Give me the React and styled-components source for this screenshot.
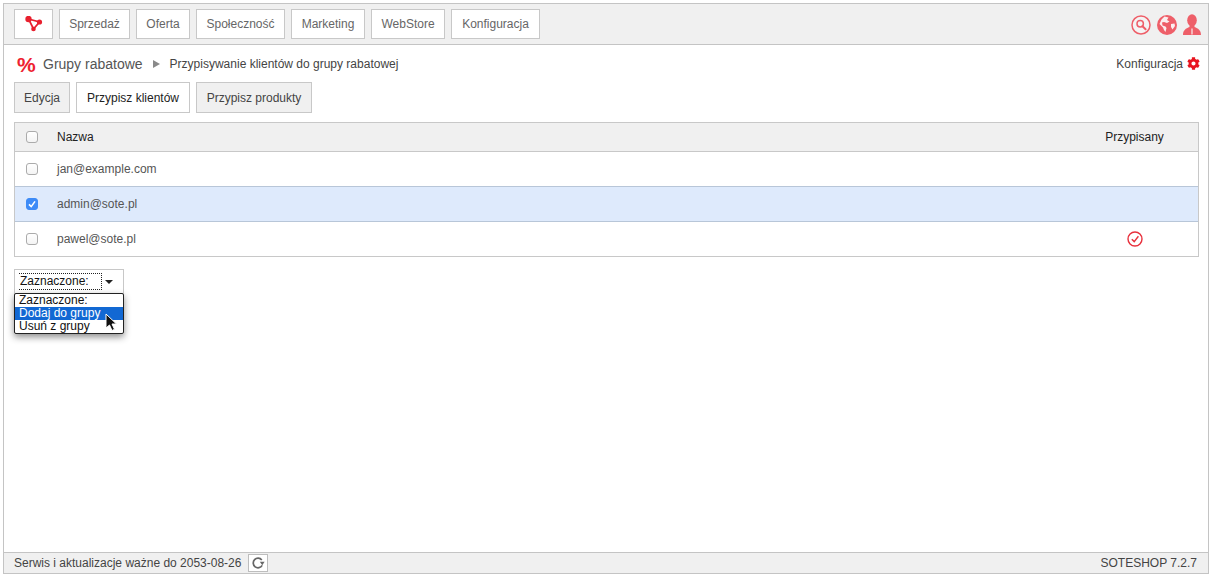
import styled, { createGlobalStyle } from "styled-components";
import { useState } from "react";
import { FaCog } from "react-icons/fa";

const GlobalStyle = createGlobalStyle`
  html, body {
    margin: 0;
    padding: 0;
    background: #fff;
  }
  body {
    font-family: "Liberation Sans", Arial, sans-serif;
    font-size: 12px;
    color: #444;
  }
  * {
    box-sizing: border-box;
  }
`;

const Page = styled.div`
  height: 578px;
  padding: 3px 4px 4px 3px;
`;

const Frame = styled.div`
  height: 100%;
  border: 1px solid #c4c4c4;
  display: flex;
  flex-direction: column;
`;

const TopBar = styled.header`
  height: 41px;
  flex: none;
  background: #f0f0f0;
  border-bottom: 1px solid #c4c4c4;
  padding: 5px 7px 0 10px;
  display: flex;
  justify-content: space-between;
`;

const Nav = styled.nav`
  display: flex;
  gap: 6px;
`;

const NavButton = styled.div`
  height: 30px;
  width: ${(p) => p.$w}px;
  background: #fff;
  border: 1px solid #c8c8c8;
  color: #666;
  display: flex;
  align-items: center;
  justify-content: center;
`;

const TopIcons = styled.div`
  display: flex;
  align-items: center;
  gap: 6px;
  height: 30px;
  padding-top: 1px;
`;

const Content = styled.main`
  flex: 1;
  padding: 0 9px 0 10px;
  position: relative;
`;

const Crumbs = styled.div`
  height: 37px;
  display: flex;
  align-items: center;
  padding-left: 3px;
`;

const Percent = styled.span`
  color: #ee2230;
  font-size: 21px;
  font-weight: 700;
  line-height: 1;
  width: 26px;
  padding-top: 2px;
`;

const CrumbTitle = styled.span`
  font-size: 14px;
  color: #555;
`;

const CrumbArrow = styled.span`
  width: 0;
  height: 0;
  border-left: 7px solid #8a8a8a;
  border-top: 4px solid transparent;
  border-bottom: 4px solid transparent;
  margin: 1px 10px 0 10px;
`;

const CrumbSub = styled.span`
  color: #444;
`;

const ConfigLink = styled.div`
  margin-left: auto;
  margin-right: -1px;
  display: flex;
  align-items: center;
  gap: 4px;
  color: #444;
`;

const GearIcon = styled(FaCog)`
  width: 13px;
  height: 13px;
  color: #e8141f;
`;

const Tabs = styled.div`
  display: flex;
  gap: 6px;
`;

const Tab = styled.div`
  height: 31px;
  width: ${(p) => p.$w}px;
  border: 1px solid #c8c8c8;
  background: ${(p) => (p.$active ? "#fff" : "#f0f0f0")};
  color: ${(p) => (p.$active ? "#222" : "#444")};
  display: flex;
  align-items: center;
  justify-content: center;
`;

const Grid = styled.div`
  margin-top: 9px;
  border: 1px solid #c8c8c8;
`;

const Row = styled.div`
  height: ${(p) => (p.$head ? 28 : p.$selected ? 36 : 35)}px;
  display: grid;
  grid-template-columns: 42px 1fr 127px;
  align-items: center;
  background: ${(p) => (p.$head ? "#f0f0f0" : p.$selected ? "#deeafc" : "#fff")};
  color: ${(p) => (p.$head ? "#222" : "#555")};
  border-top: ${(p) => (p.$head ? "none" : `1px solid ${p.$selected ? "#b8c6d8" : "#c8c8c8"}`)};
  border-bottom: ${(p) => (p.$selected ? "1px solid #b8c6d8" : "none")};
  margin-bottom: ${(p) => (p.$selected ? "-1px" : "0")};
  position: relative;
  z-index: ${(p) => (p.$selected ? 1 : 0)};
`;

const CheckCell = styled.div`
  display: flex;
  justify-content: center;
  padding-right: 9px;
`;

const CenterCell = styled.div`
  display: flex;
  justify-content: center;
`;

const IconCell = styled(CenterCell)`
  padding-left: 1px;
`;

const Box = styled.span`
  width: 12px;
  height: 12px;
  border-radius: 3px;
  border: 1px solid ${(p) => (p.$on ? "#3d8bf7" : "#ababab")};
  background: ${(p) => (p.$on ? "#3d8bf7" : "linear-gradient(#fff, #f4f4f4)")};
  display: flex;
  align-items: center;
  justify-content: center;
`;

const SelectWrap = styled.div`
  position: relative;
  margin-top: 12px;
  width: 110px;
  height: 25px;
`;

const SelectBox = styled.div`
  width: 110px;
  height: 25px;
  border: 1px solid #c8c8c8;
  background: #fff;
  display: flex;
  align-items: center;
  padding: 0 0 0 4px;
  color: #111;
`;

const SelectLabel = styled.span`
  width: 83px;
  height: 17px;
  border: 1px dotted #222;
  border-left: none;
  line-height: 15px;
  padding-left: 1px;
`;

const Caret = styled.span`
  width: 0;
  height: 0;
  margin-left: 3px;
  border-top: 4px solid #222;
  border-left: 4px solid transparent;
  border-right: 4px solid transparent;
`;

const Menu = styled.ul`
  position: absolute;
  top: 24px;
  left: 0;
  width: 110px;
  margin: 0;
  padding: 0;
  list-style: none;
  background: #fff;
  border: 1px solid #222;
  border-radius: 2px;
  box-shadow: 0 3px 7px rgba(0, 0, 0, 0.45);
  z-index: 2;
`;

const MenuItem = styled.li`
  height: 13px;
  line-height: 13px;
  padding-left: 4px;
  color: ${(p) => (p.$hover ? "#fff" : "#111")};
  background: ${(p) => (p.$hover ? "#1268d3" : "transparent")};
`;

const Pointer = styled.svg`
  position: absolute;
  left: 91px;
  top: 44px;
  z-index: 3;
`;

const Footer = styled.footer`
  height: 21px;
  flex: none;
  background: #f0f0f0;
  border-top: 1px solid #c4c4c4;
  padding: 0 11px 0 10px;
  display: flex;
  align-items: center;
  color: #444;
`;

const RefreshButton = styled.span`
  width: 20px;
  height: 18px;
  margin-left: 7px;
  background: #fff;
  border: 1px solid #bdbdbd;
  display: flex;
  align-items: center;
  justify-content: center;
`;

const Version = styled.span`
  margin-left: auto;
`;

const navItems = [
  ["Sprzedaż", 71],
  ["Oferta", 54],
  ["Społeczność", 89],
  ["Marketing", 74],
  ["WebStore", 74],
  ["Konfiguracja", 89],
];

const tabs = [
  ["Edycja", 56, false],
  ["Przypisz klientów", 114, true],
  ["Przypisz produkty", 116, false],
];

const clients = [
  { email: "jan@example.com", checked: false, assigned: false },
  { email: "admin@sote.pl", checked: true, assigned: false },
  { email: "pawel@sote.pl", checked: false, assigned: true },
];

const Logo = () => (
  <svg width="20" height="16" viewBox="0 0 20 16">
    <path d="M4.5 3 L15.5 6 L9.5 13 Z" fill="none" stroke="#e8202e" strokeWidth="1.8" />
    <circle cx="4.5" cy="3" r="3.2" fill="#e8202e" />
    <circle cx="15.5" cy="6" r="2.6" fill="#e8202e" />
    <circle cx="9.5" cy="13" r="2.3" fill="#e8202e" />
  </svg>
);

const SearchIcon = () => (
  <svg width="20" height="20" viewBox="0 0 20 20">
    <circle cx="10" cy="10" r="9" fill="#fff" fillOpacity="0.3" stroke="#ee5f69" strokeWidth="1.5" />
    <circle cx="9.2" cy="8.8" r="3.2" fill="none" stroke="#ee5f69" strokeWidth="1.5" />
    <path d="M11.5 11.2 L14.6 14.2" stroke="#ee5f69" strokeWidth="2" strokeLinecap="round" />
  </svg>
);

const GlobeIcon = () => (
  <svg width="20" height="20" viewBox="0 0 20 20">
    <circle cx="10" cy="10" r="10" fill="#ee5f69" />
    <path
      d="M7.5 1.5 L11.5 2.5 L10 5 L12.5 6.5 L10 8 L7 7 L5 7.5 L5.5 10.5 L8.5 11.5 L9.5 13 L8.5 17 L7 15 L6 12.5 L2.5 9 L4.5 4.5 Z M14 9 L17.5 8.5 L18 11 L15.5 14.5 L14 12 Z"
      fill="#fbeeef"
    />
  </svg>
);

const PersonIcon = () => (
  <svg width="18" height="22" viewBox="0 0 18 22">
    <ellipse cx="9" cy="6.2" rx="4.8" ry="6" fill="#ee5f69" />
    <path d="M0 21 C0 16 3 14.5 6.5 13 L6.5 10 H11.5 L11.5 13 C15 14.5 18 16 18 21 Z" fill="#ee5f69" />
    <path d="M9 14.5 L9 20.5" stroke="#fbeeef" strokeWidth="1.2" />
  </svg>
);

const AssignedIcon = () => (
  <svg width="16" height="16" viewBox="0 0 16 16">
    <circle cx="8" cy="8" r="7" fill="none" stroke="#e8303c" strokeWidth="1.4" />
    <path d="M4.8 8.2 L7.2 10.6 L11.4 5.2" fill="none" stroke="#e8303c" strokeWidth="1.4" />
  </svg>
);

const RefreshIcon = () => (
  <svg width="14" height="14" viewBox="0 0 14 14">
    <path d="M11.2 9.4 A4.8 4.8 0 1 1 10.8 4" fill="none" stroke="#666" strokeWidth="1.7" />
    <path d="M8.8 5.8 H13.6 L11.3 9.2 Z" fill="#666" />
  </svg>
);

const Check = () => (
  <svg width="10" height="10" viewBox="0 0 10 10">
    <path d="M2 5.4 L4.2 7.6 L8 2.4" fill="none" stroke="#fff" strokeWidth="1.6" />
  </svg>
);

const App = () => {
  const [rows] = useState(clients);

  return (
    <Page>
      <GlobalStyle />
      <Frame>
        <TopBar>
          <Nav>
            <NavButton $w={39}>
              <Logo />
            </NavButton>
            {navItems.map(([label, width]) => (
              <NavButton key={label} $w={width}>
                {label}
              </NavButton>
            ))}
          </Nav>
          <TopIcons>
            <SearchIcon />
            <GlobeIcon />
            <PersonIcon />
          </TopIcons>
        </TopBar>

        <Content>
          <Crumbs>
            <Percent>%</Percent>
            <CrumbTitle>Grupy rabatowe</CrumbTitle>
            <CrumbArrow />
            <CrumbSub>Przypisywanie klientów do grupy rabatowej</CrumbSub>
            <ConfigLink>
              Konfiguracja
              <GearIcon />
            </ConfigLink>
          </Crumbs>

          <Tabs>
            {tabs.map(([label, width, active]) => (
              <Tab key={label} $w={width} $active={active}>
                {label}
              </Tab>
            ))}
          </Tabs>

          <Grid>
            <Row $head>
              <CheckCell>
                <Box />
              </CheckCell>
              <span>Nazwa</span>
              <CenterCell>Przypisany</CenterCell>
            </Row>
            {rows.map((row) => (
              <Row key={row.email} $selected={row.checked}>
                <CheckCell>
                  <Box $on={row.checked}>{row.checked && <Check />}</Box>
                </CheckCell>
                <span>{row.email}</span>
                <IconCell>{row.assigned && <AssignedIcon />}</IconCell>
              </Row>
            ))}
          </Grid>

          <SelectWrap>
            <SelectBox>
              <SelectLabel>Zaznaczone:</SelectLabel>
              <Caret />
            </SelectBox>
            <Menu>
              <MenuItem>Zaznaczone:</MenuItem>
              <MenuItem $hover>Dodaj do grupy</MenuItem>
              <MenuItem>Usuń z grupy</MenuItem>
            </Menu>
            <Pointer width="13" height="19" viewBox="0 0 13 19">
              <path
                d="M1 1 L1 15 L4.5 12 L7 17.5 L9.5 16.3 L7 11 L11.5 11 Z"
                fill="#111"
                stroke="#fff"
                strokeWidth="1"
              />
            </Pointer>
          </SelectWrap>
        </Content>

        <Footer>
          Serwis i aktualizacje ważne do 2053-08-26
          <RefreshButton>
            <RefreshIcon />
          </RefreshButton>
          <Version>SOTESHOP 7.2.7</Version>
        </Footer>
      </Frame>
    </Page>
  );
};

export default App;
